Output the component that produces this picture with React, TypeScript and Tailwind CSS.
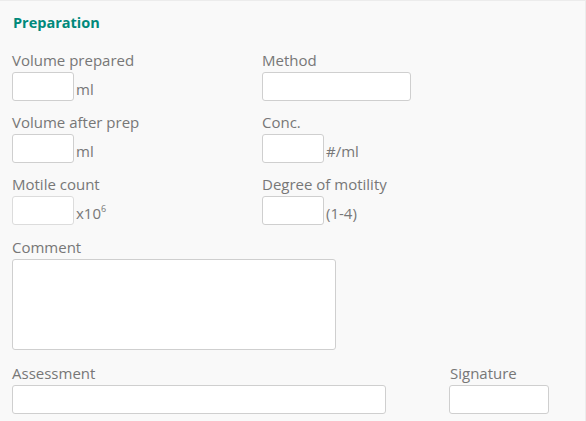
import React from 'react';

const labelCls = 'block text-[15px] leading-5 text-[#777777] mb-[2px]';
const inputCls = 'h-[29px] rounded-[3px] border border-[#cfcfcf] bg-white outline-none';

function Unit({ children }: { children: React.ReactNode }) {
  return <span className="ml-[2px] mt-[4px] text-[15px] leading-5 text-[#777777]">{children}</span>;
}

function SmallField({ label, unit, disabled }: { label: string; unit: React.ReactNode; disabled?: boolean }) {
  return (
    <div>
      <label className={labelCls}>{label}</label>
      <div className="flex items-center">
        <input
          type="text"
          disabled={disabled}
          className={`${inputCls} w-[62px] ${disabled ? 'bg-[#f7f7f7] border-[#dcdcdc]' : ''}`}
        />
        <Unit>{unit}</Unit>
      </div>
    </div>
  );
}

export default function App() {
  return (
    <div
      className="min-h-[421px] w-[586px] bg-[#f9f9f9] border-t border-r border-[#ececec] pl-[12px] pt-[12px]"
      style={{ fontFamily: '"Open Sans", sans-serif' }}
    >
      {/* Header */}
      <h2 className="text-[14.5px] font-bold leading-5 text-[#00897b] pl-[1px] mb-[17px]">Preparation</h2>

      {/* Fields */}
      <div className="grid grid-cols-[250px_250px] gap-y-[11px]">
        <SmallField label="Volume prepared" unit="ml" />
        <div>
          <label className={labelCls}>Method</label>
          <input type="text" className={`${inputCls} w-[149px]`} />
        </div>

        <SmallField label="Volume after prep" unit="ml" />
        <SmallField label="Conc." unit="#/ml" />

        <SmallField
          label="Motile count"
          disabled
          unit={
            <>
              x10<sup className="text-[9px] relative -top-[7px]">6</sup>
            </>
          }
        />
        <SmallField label="Degree of motility" unit="(1-4)" />
      </div>

      {/* Comment */}
      <div className="mt-[12px]">
        <label className={labelCls}>Comment</label>
        <textarea className="block h-[91px] w-[324px] resize-none rounded-[3px] border border-[#cfcfcf] bg-white outline-none" />
      </div>

      {/* Assessment + Signature */}
      <div className="mt-[13px] flex">
        <div>
          <label className={labelCls}>Assessment</label>
          <input type="text" className={`${inputCls} h-[28px] w-[374px]`} />
        </div>
        <div className="ml-[63px]">
          <label className={`${labelCls} pl-[1px]`}>Signature</label>
          <input type="text" className={`${inputCls} h-[28px] w-[100px]`} />
        </div>
      </div>
    </div>
  );
}
